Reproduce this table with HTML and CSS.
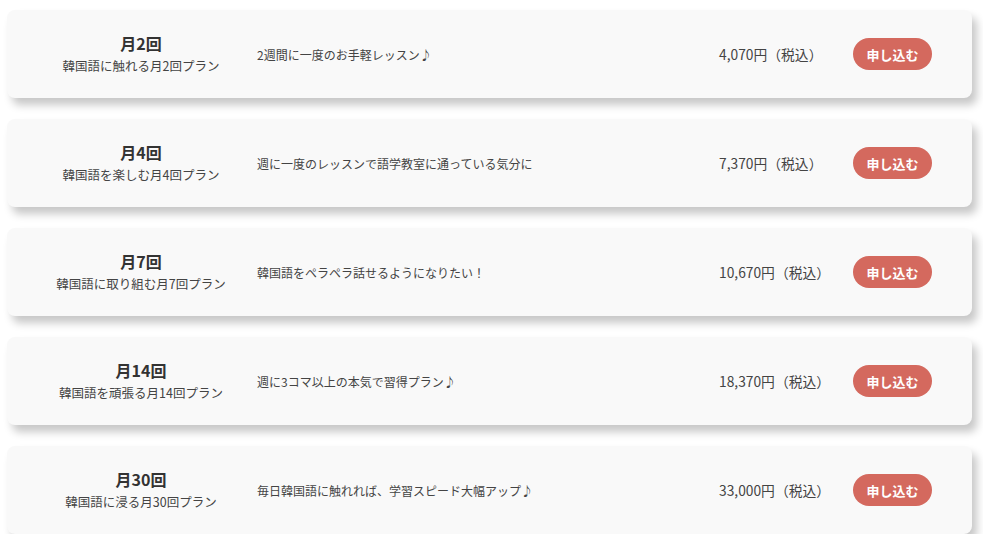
FILE: index.html
```html
<!DOCTYPE html>
<html lang="ja">
<head>
<meta charset="utf-8">
<link rel="stylesheet" href="styles.css">
</head>
<body>
<div class="plans">
  <div class="card">
    <div class="name"><div class="title">月2回</div><div class="sub">韓国語に触れる月2回プラン</div></div>
    <div class="desc">2週間に一度のお手軽レッスン♪</div>
    <div class="price">4,070円（税込）</div>
    <a class="btn">申し込む</a>
  </div>
  <div class="card">
    <div class="name"><div class="title">月4回</div><div class="sub">韓国語を楽しむ月4回プラン</div></div>
    <div class="desc">週に一度のレッスンで語学教室に通っている気分に</div>
    <div class="price">7,370円（税込）</div>
    <a class="btn">申し込む</a>
  </div>
  <div class="card">
    <div class="name"><div class="title">月7回</div><div class="sub">韓国語に取り組む月7回プラン</div></div>
    <div class="desc">韓国語をペラペラ話せるようになりたい！</div>
    <div class="price">10,670円（税込）</div>
    <a class="btn">申し込む</a>
  </div>
  <div class="card">
    <div class="name"><div class="title">月14回</div><div class="sub">韓国語を頑張る月14回プラン</div></div>
    <div class="desc">週に3コマ以上の本気で習得プラン♪</div>
    <div class="price">18,370円（税込）</div>
    <a class="btn">申し込む</a>
  </div>
  <div class="card">
    <div class="name"><div class="title">月30回</div><div class="sub">韓国語に浸る月30回プラン</div></div>
    <div class="desc">毎日韓国語に触れれば、学習スピード大幅アップ♪</div>
    <div class="price">33,000円（税込）</div>
    <a class="btn">申し込む</a>
  </div>
</div>
</body>
</html>
```

FILE: styles.css
```css
* { box-sizing: border-box; }
body {
  margin: 0;
  background: #fff;
  font-family: "Noto Sans CJK JP", "Noto Sans", sans-serif;
  color: #333;
}
.plans {
  display: flex;
  flex-direction: column;
  gap: 21px;
  padding: 10px 11px 0 7px;
}
.card {
  height: 88px;
  background: #f9f9f9;
  border-radius: 8px;
  box-shadow: 5px 7px 8px rgba(0,0,0,0.22);
  display: flex;
  align-items: center;
  padding: 0 40px 0 18px;
}
.name {
  width: 232px;
  text-align: center;
  margin-top: -1px;
}
.title {
  font-size: 16px;
  font-weight: bold;
  line-height: 22px;
  color: #333;
}
.sub {
  font-size: 12.5px;
  line-height: 20px;
  margin-top: 2px;
  color: #444;
}
.desc {
  flex: 1;
  font-size: 12px;
  color: #444;
}
.price {
  width: 134px;
  font-size: 13.8px;
  color: #444;
}
.btn {
  width: 79px;
  height: 32px;
  border-radius: 16px;
  background: #d4695e;
  color: #fff;
  font-size: 13px;
  font-weight: bold;
  display: flex;
  align-items: center;
  justify-content: center;
}
```
